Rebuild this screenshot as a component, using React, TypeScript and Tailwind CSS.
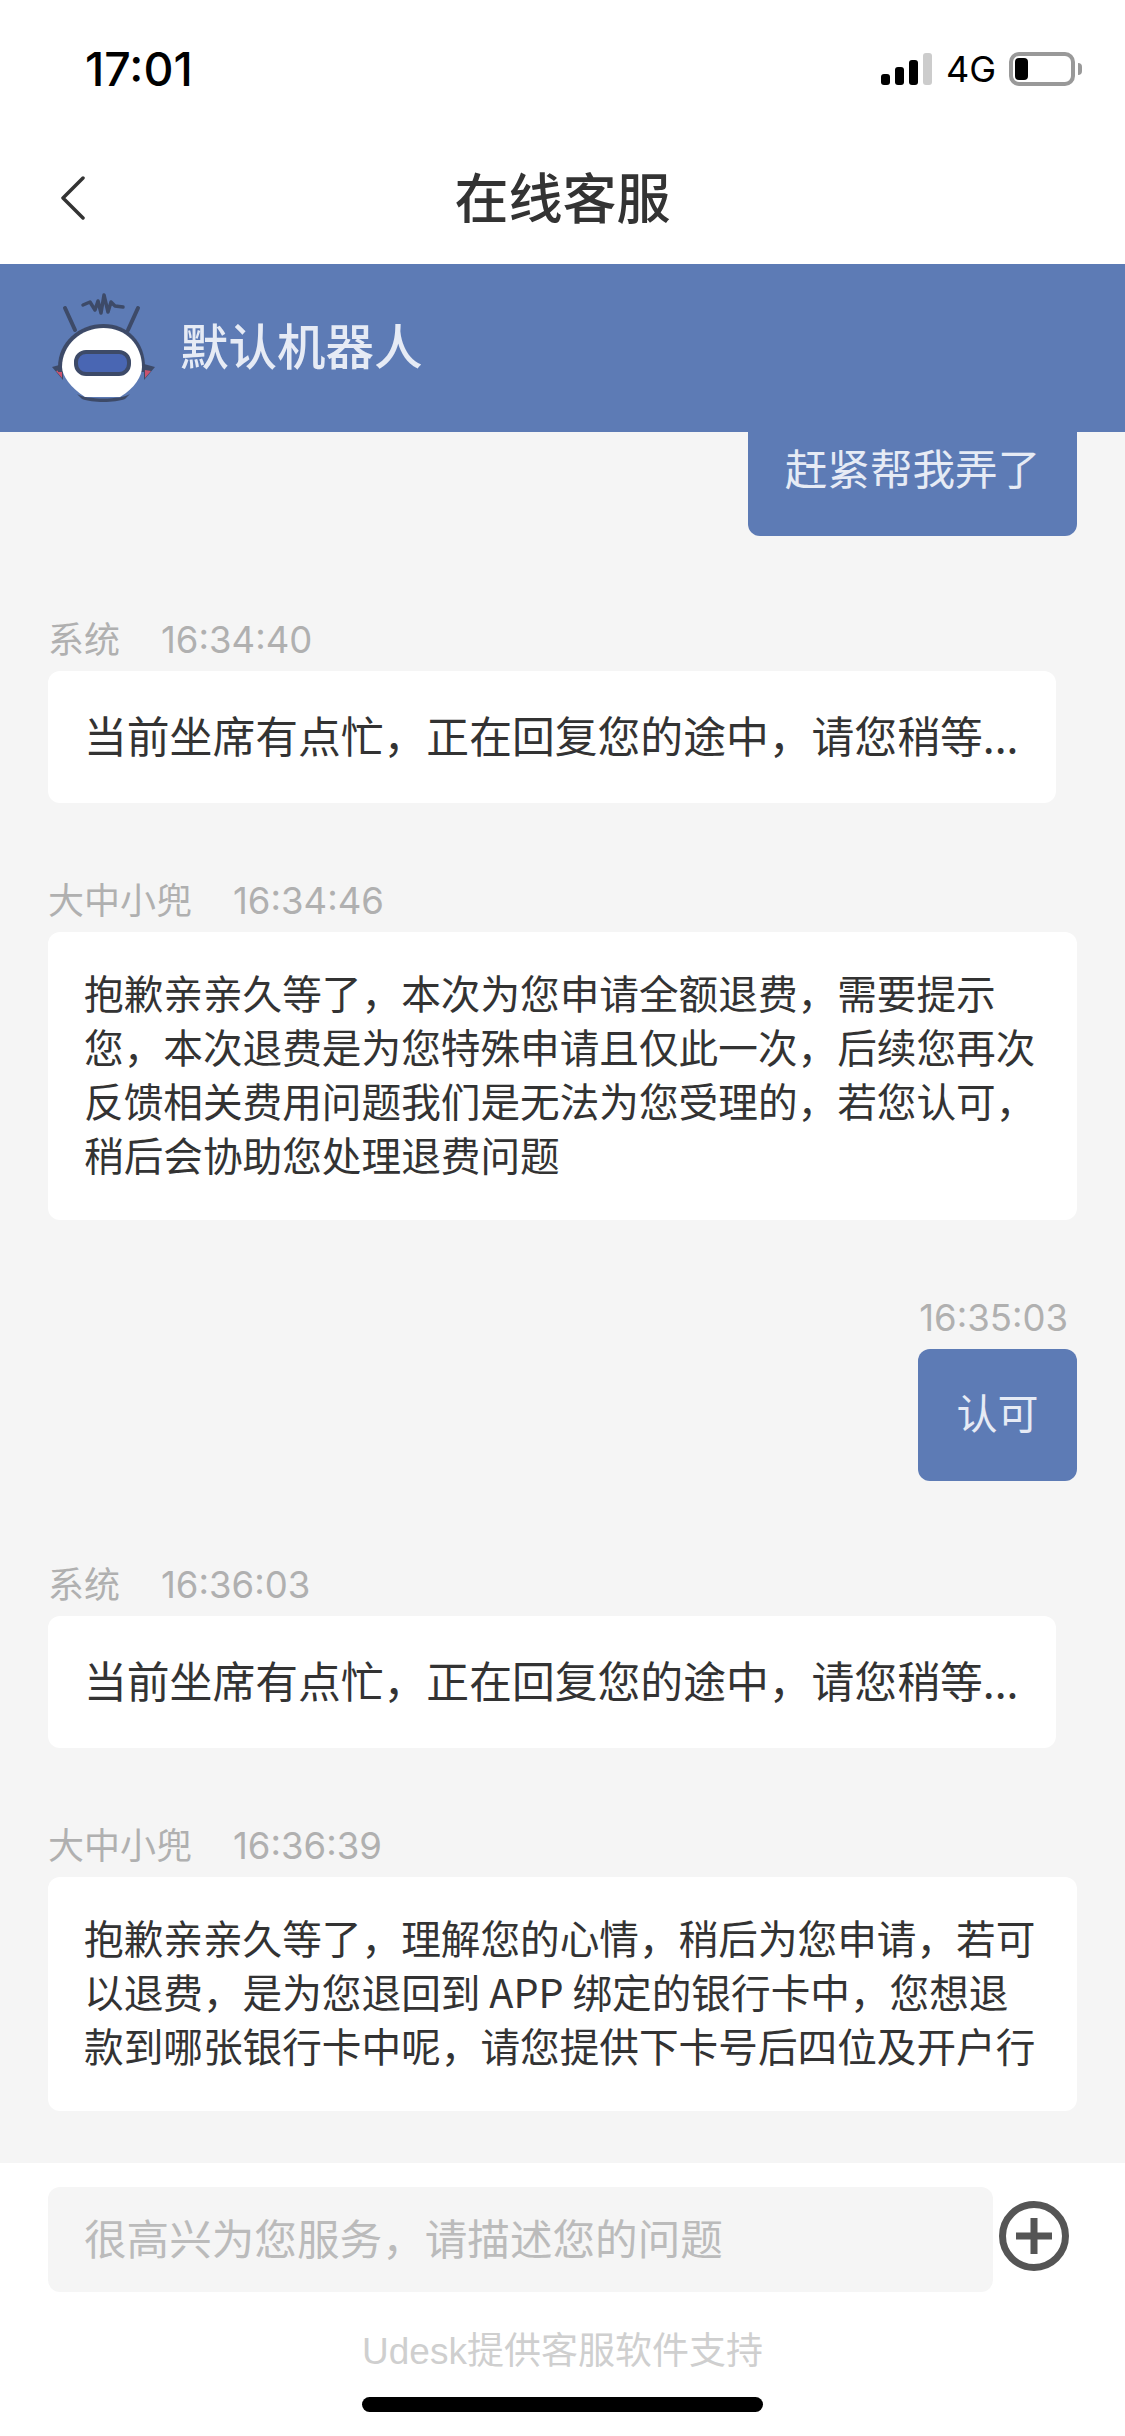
const CJK = "font-['Noto_Sans_CJK_SC','Liberation_Sans',sans-serif]";

function Robot() {
  return (
    <svg width="105" height="120" viewBox="0 0 105 120" fill="none">
      <path d="M14 20 L24 42 M87 20 L77 42" stroke="#3d4a68" strokeWidth="4" strokeLinecap="round" />
      <path d="M32 17 L39 14 L44 22 L47 13 L50 25 L53 7 L57 24 L60 14 L64 18 L72 19" stroke="#3d4a68" strokeWidth="3.5" strokeLinejoin="round" strokeLinecap="round" />
      <path d="M1 79 L12 76 L12 92 Z M104 79 L93 76 L93 92 Z" fill="#3d4a68" />
      <path d="M5 83 L11 82 L11 90 Z M100 83 L94 82 L94 90 Z" fill="#c9536f" />
      <path d="M7 79 C7 54 28 36 52.5 36 C77 36 94 54 94 79 L94 84 H7 Z" fill="#3d4a68" />
      <path d="M26 106 C35 112 70 112 79 106 L74 111 C64 115 41 115 31 111 Z" fill="#3d4a68" />
      <path d="M11 79 C11 57 30 40 52.5 40 C75 40 91 57 91 79 C91 88 84 100 69 109 H34 C20 100 11 88 11 79 Z" fill="#fff" />
      <rect x="25" y="64" width="53" height="22" rx="10" fill="#4966b3" stroke="#3d4a68" strokeWidth="4" />
    </svg>
  );
}

function Label({ name, time }: { name: string; time: string }) {
  return (
    <div className="h-[38px] mb-[15px] flex items-center gap-[41px] text-[36px] text-[#b0b0b0]">
      <span>{name}</span>
      <span className="font-['Inter',sans-serif] text-[36.5px] pt-[6px]">{time}</span>
    </div>
  );
}

function Card({ lines }: { lines: string[] }) {
  return (
    <div className="bg-white rounded-[12px] pl-[36px] pr-[37px] pt-[33px] pb-[39px] text-[39.65px] leading-[54px] text-[#333] whitespace-nowrap">
      {lines.map((line) => (
        <div key={line}>{line}</div>
      ))}
    </div>
  );
}

function BusyCard() {
  return (
    <div className="w-[1008px] h-[132px] bg-white rounded-[12px] pl-[36px] pb-[6px] flex items-center text-[42.8px] text-[#333] whitespace-nowrap">
      当前坐席有点忙，正在回复您的途中，请您稍等...
    </div>
  );
}

export default function App() {
  return (
    <div className={`${CJK} w-[1125px] h-[2436px] flex flex-col bg-[#f5f5f5] overflow-hidden`}>
      {/* status bar */}
      <div className="h-[132px] bg-white pl-[85px] pr-[43px] pt-[44px] flex items-start justify-between">
        <span className="text-[46.5px] leading-[50px] font-medium text-black font-['Inter',sans-serif]">17:01</span>
        <div className="flex items-center h-[50px]">
          <div className="flex items-end gap-[5px] h-[32px]">
            <div className="w-[9px] h-[11px] rounded-[3px] bg-black" />
            <div className="w-[9px] h-[18px] rounded-[3px] bg-black" />
            <div className="w-[9px] h-[25px] rounded-[3px] bg-black" />
            <div className="w-[9px] h-[32px] rounded-[3px] bg-[#cccccc]" />
          </div>
          <span className="ml-[14px] text-[36px] leading-[36px] text-black font-['Inter',sans-serif]">4G</span>
          <div className="ml-[13px] w-[66px] h-[34px] border-[4px] border-[#999] rounded-[10px] p-[2px]">
            <div className="w-[13px] h-full rounded-[4px] bg-black" />
          </div>
          <div className="ml-[3px] w-[4px] h-[12px] rounded-r-[4px] bg-[#999]" />
        </div>
      </div>

      {/* nav */}
      <div className="h-[132px] bg-white relative flex items-center justify-center">
        <svg className="absolute left-[60px] top-[44px]" width="26" height="44" viewBox="0 0 26 44" fill="none">
          <path d="M23 2 L3 22 L23 42" stroke="#333" strokeWidth="3.5" strokeLinecap="round" strokeLinejoin="round" />
        </svg>
        <span className="text-[54px] font-medium text-[#333] -mt-[6px]">在线客服</span>
      </div>

      {/* agent bar */}
      <div className="h-[168px] bg-[#5d7bb5] pl-[51px] flex items-center relative z-10">
        <Robot />
        <span className="ml-[24px] text-[48.5px] font-medium text-[#e6ebf5] -mt-[7px]">默认机器人</span>
      </div>

      {/* chat */}
      <div className="h-[1731px] overflow-hidden px-[48px] flex flex-col gap-[76px]">
        <div className="self-end w-[329px] h-[104px] mb-[6px] pb-[34px] rounded-b-[12px] bg-[#5d7bb5] flex items-center justify-center text-[42.6px] text-[#e6ebf5] whitespace-nowrap">
          赶紧帮我弄了
        </div>
        <div>
          <Label name="系统" time="16:34:40" />
          <BusyCard />
        </div>
        <div>
          <Label name="大中小兜" time="16:34:46" />
          <Card
            lines={[
              "抱歉亲亲久等了，本次为您申请全额退费，需要提示",
              "您，本次退费是为您特殊申请且仅此一次，后续您再次",
              "反馈相关费用问题我们是无法为您受理的，若您认可，",
              "稍后会协助您处理退费问题",
            ]}
          />
        </div>
        <div className="self-end flex flex-col items-end mb-[6px]">
          <div className="h-[38px] mb-[15px] pr-[9px] pt-[6px] flex items-center text-[36.5px] text-[#b0b0b0] font-['Inter',sans-serif]">16:35:03</div>
          <div className="w-[159px] h-[132px] pb-[6px] rounded-[12px] bg-[#5d7bb5] flex items-center justify-center text-[41px] text-[#e6ebf5]">认可</div>
        </div>
        <div>
          <Label name="系统" time="16:36:03" />
          <BusyCard />
        </div>
        <div>
          <Label name="大中小兜" time="16:36:39" />
          <Card
            lines={[
              "抱歉亲亲久等了，理解您的心情，稍后为您申请，若可",
              "以退费，是为您退回到 APP 绑定的银行卡中，您想退",
              "款到哪张银行卡中呢，请您提供下卡号后四位及开户行",
            ]}
          />
        </div>
      </div>

      {/* input */}
      <div className="flex-1 bg-white flex flex-col items-center">
        <div className="w-full pl-[48px] pt-[24px] flex items-center">
          <div className="w-[945px] h-[105px] rounded-[12px] bg-[#f5f5f5] pl-[36px] pb-[6px] flex items-center text-[42.6px] text-[#bbbbbb]">
            很高兴为您服务，请描述您的问题
          </div>
          <svg className="ml-[6px] -mt-[7px]" width="70" height="70" viewBox="0 0 70 70" fill="none">
            <circle cx="35" cy="35" r="31.5" stroke="#555" strokeWidth="7" />
            <path d="M35 17 V53 M17 35 H53" stroke="#555" strokeWidth="7" />
          </svg>
        </div>
        <div className="mt-[35px] text-[37px] leading-[50px] text-[#cfcfcf] font-['Liberation_Sans','Noto_Sans_CJK_SC',sans-serif]">Udesk提供客服软件支持</div>
        <div className="mt-[20px] w-[401px] h-[15px] rounded-full bg-black" />
      </div>
    </div>
  );
}
